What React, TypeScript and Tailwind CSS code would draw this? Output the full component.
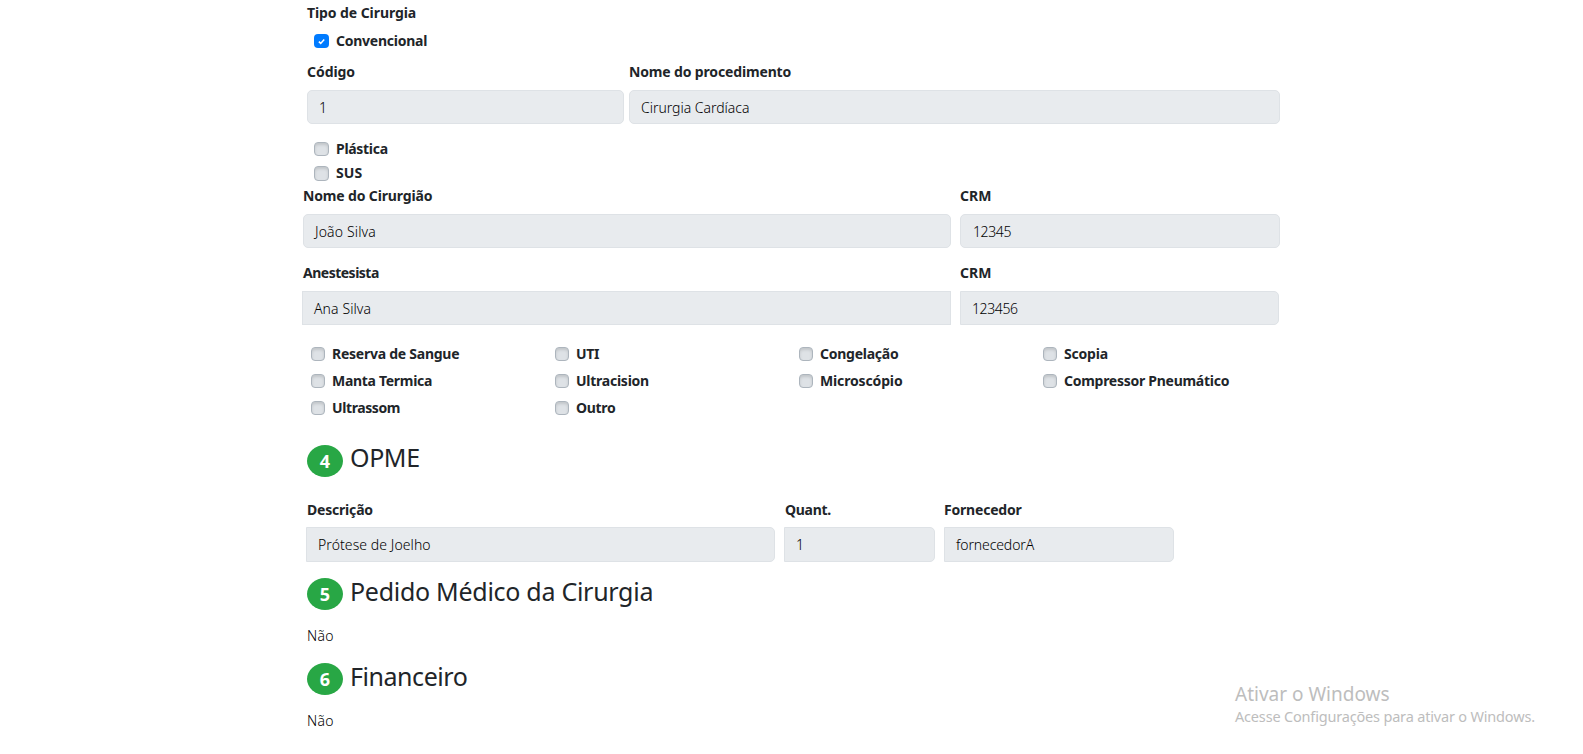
import type { ReactNode } from "react";
import clsx from "clsx";

const Label = ({ children, className }: { children: ReactNode; className?: string }) => (
  <div className={clsx("h-5 whitespace-nowrap text-[14px] leading-5 font-bold", className)}>{children}</div>
);

const Field = ({ value, className }: { value: string; className?: string }) => (
  <div
    className={clsx(
      "flex items-center whitespace-nowrap border border-[#dee2e6] bg-[#e8ebee] text-[14px] font-light text-black",
      className,
    )}
  >
    {value}
  </div>
);

const Check = ({ label, checked, wide, box, text = "tracking-[-0.25px]" }: {
  label: string;
  checked?: boolean;
  wide?: boolean;
  box?: string;
  text?: string;
}) => (
  <div className="flex h-5 items-center gap-[7px]">
    {checked ? (
      <span className="flex h-[14px] w-[15px] items-center justify-center rounded-[4px] bg-[#007bff]">
        <svg viewBox="0 0 8 8" className="h-[7px] w-[7px]" fill="none" stroke="#fff" strokeWidth="1.8">
          <path d="M1 4.2 3.1 6.2 7.1 1.8" />
        </svg>
      </span>
    ) : (
      <span
        className={clsx(
          "rounded-[4px] border border-[#adb5bd] bg-[#dee2e6] shadow-[inset_0_2px_3px_rgba(0,0,0,0.13)]",
          wide ? "w-[15px]" : "w-[14px]",
          box ?? "h-[14px]",
        )}
      />
    )}
    <Label className={text}>{label}</Label>
  </div>
);

const Title = ({ n, children, className, text }: {
  n: number;
  children: ReactNode;
  className?: string;
  text: string;
}) => (
  <div className={clsx("ml-[5px] flex h-8", className)}>
    <span className="flex h-8 w-9 items-center justify-center rounded-[50%] bg-[#28a745] text-[18px] leading-8 font-bold text-white">
      {n}
    </span>
    <h2 className={clsx("ml-[7px] h-6 text-[25px] leading-6 font-normal whitespace-nowrap", text)}>{children}</h2>
  </div>
);

const equipment = [
  { name: "Reserva de Sangue", text: "tracking-[-0.25px]" },
  { name: "UTI", text: "tracking-[-0.3px]" },
  { name: "Congelação", text: "tracking-[-0.25px]" },
  { name: "Scopia", text: "tracking-[-0.2px]" },
  { name: "Manta Termica", text: "tracking-[-0.3px]" },
  { name: "Ultracision", text: "tracking-[-0.25px]" },
  { name: "Microscópio", text: "tracking-[-0.15px]" },
  { name: "Compressor Pneumático", text: "tracking-[-0.27px]" },
  { name: "Ultrassom", text: "tracking-[-0.4px]" },
  { name: "Outro", text: "tracking-[-0.3px]" },
];

export default function App() {
  return (
    <div className="relative h-[754px] w-[1583px] overflow-hidden bg-white pt-[3px] pl-[302px] font-['Noto_Sans','Open_Sans',sans-serif] text-[#212529]">
      <Label className="ml-[5px] tracking-[-0.08px]">Tipo de Cirurgia</Label>
      <div className="mt-2 ml-3">
        <Check label="Convencional" checked wide />
      </div>

      <div className="mt-[11px] ml-[5px] flex gap-[5px]">
        <div className="w-[317px]">
          <Label className="tracking-[-0.05px]">Código</Label>
          <Field value="1" className="mt-2 h-[34px] rounded-[5px] pt-px pl-[11px]" />
        </div>
        <div className="w-[651px]">
          <Label className="tracking-[-0.15px]">Nome do procedimento</Label>
          <Field value="Cirurgia Cardíaca" className="mt-2 h-[34px] rounded-[5px] pt-px pl-[11px] tracking-[-0.02px]" />
        </div>
      </div>

      <div className="mt-[15px] ml-3 flex flex-col gap-1">
        <Check label="Plástica" wide text="tracking-[-0.3px]" />
        <Check label="SUS" wide box="h-[15px]" text="tracking-[0.1px]" />
      </div>

      <div className="mt-[3px] ml-px flex gap-[9px]">
        <div className="w-[648px]">
          <Label className="tracking-[-0.15px]">Nome do Cirurgião</Label>
          <Field value="João Silva" className="mt-2 h-[34px] rounded-[5px] pt-px pl-[11px] tracking-[0.15px]" />
        </div>
        <div className="w-[320px]">
          <Label>CRM</Label>
          <Field value="12345" className="mt-2 h-[34px] rounded-[5px] pt-px pl-[12px] tracking-[-0.4px]" />
        </div>
      </div>

      <div className="mt-[15px] flex gap-[9px]">
        <div className="w-[649px]">
          <Label className="ml-px tracking-[-0.5px]">Anestesista</Label>
          <Field value="Ana Silva" className="mt-2 h-[34px] pt-px pl-[11px] tracking-[0.1px]" />
        </div>
        <div className="w-[319px]">
          <Label>CRM</Label>
          <Field value="123456" className="mt-2 h-[34px] rounded-r-[5px] pt-px pl-[11px] tracking-[-0.4px]" />
        </div>
      </div>

      <div className="mt-[19px] ml-[9px] grid w-[976px] grid-cols-4 gap-y-[7px]">
        {equipment.map(({ name, text }) => (
          <Check key={name} label={name} text={text} />
        ))}
      </div>

      <Title n={4} className="mt-[27px]" text="tracking-[-0.4px]">OPME</Title>

      <div className="mt-[23px] ml-1 flex gap-[9px]">
        <div className="w-[469px]">
          <Label className="ml-px tracking-[-0.2px]">Descrição</Label>
          <Field value="Prótese de Joelho" className="mt-[7px] h-[35px] rounded-r-[5px] pl-[11px] tracking-[0.08px]" />
        </div>
        <div className="w-[151px]">
          <Label className="ml-px tracking-[-0.3px]">Quant.</Label>
          <Field value="1" className="mt-[7px] h-[35px] rounded-r-[5px] pl-[11px]" />
        </div>
        <div className="w-[230px]">
          <Label className="tracking-[-0.2px]">Fornecedor</Label>
          <Field value="fornecedorA" className="mt-[7px] h-[35px] rounded-r-[5px] pl-[11px] tracking-[-0.1px]" />
        </div>
      </div>

      <Title n={5} className="mt-4" text="mt-px tracking-[-0.28px]">Pedido Médico da Cirurgia</Title>
      <p className="mt-4 ml-[5px] h-5 text-[14px] leading-5 font-light text-black tracking-[0.3px]">Não</p>

      <Title n={6} className="mt-[17px]" text="mt-px tracking-[-0.45px]">Financeiro</Title>
      <p className="mt-4 ml-[5px] h-5 text-[14px] leading-5 font-light text-black tracking-[0.3px]">Não</p>

      <div className="absolute top-[680px] left-[1235px] whitespace-nowrap text-[#bdbdbd]">
        <div className="h-[26px] text-[19px] leading-7">Ativar o Windows</div>
        <div className="h-5 text-[14.5px] leading-5 tracking-[-0.18px]">Acesse Configurações para ativar o Windows.</div>
      </div>
    </div>
  );
}
